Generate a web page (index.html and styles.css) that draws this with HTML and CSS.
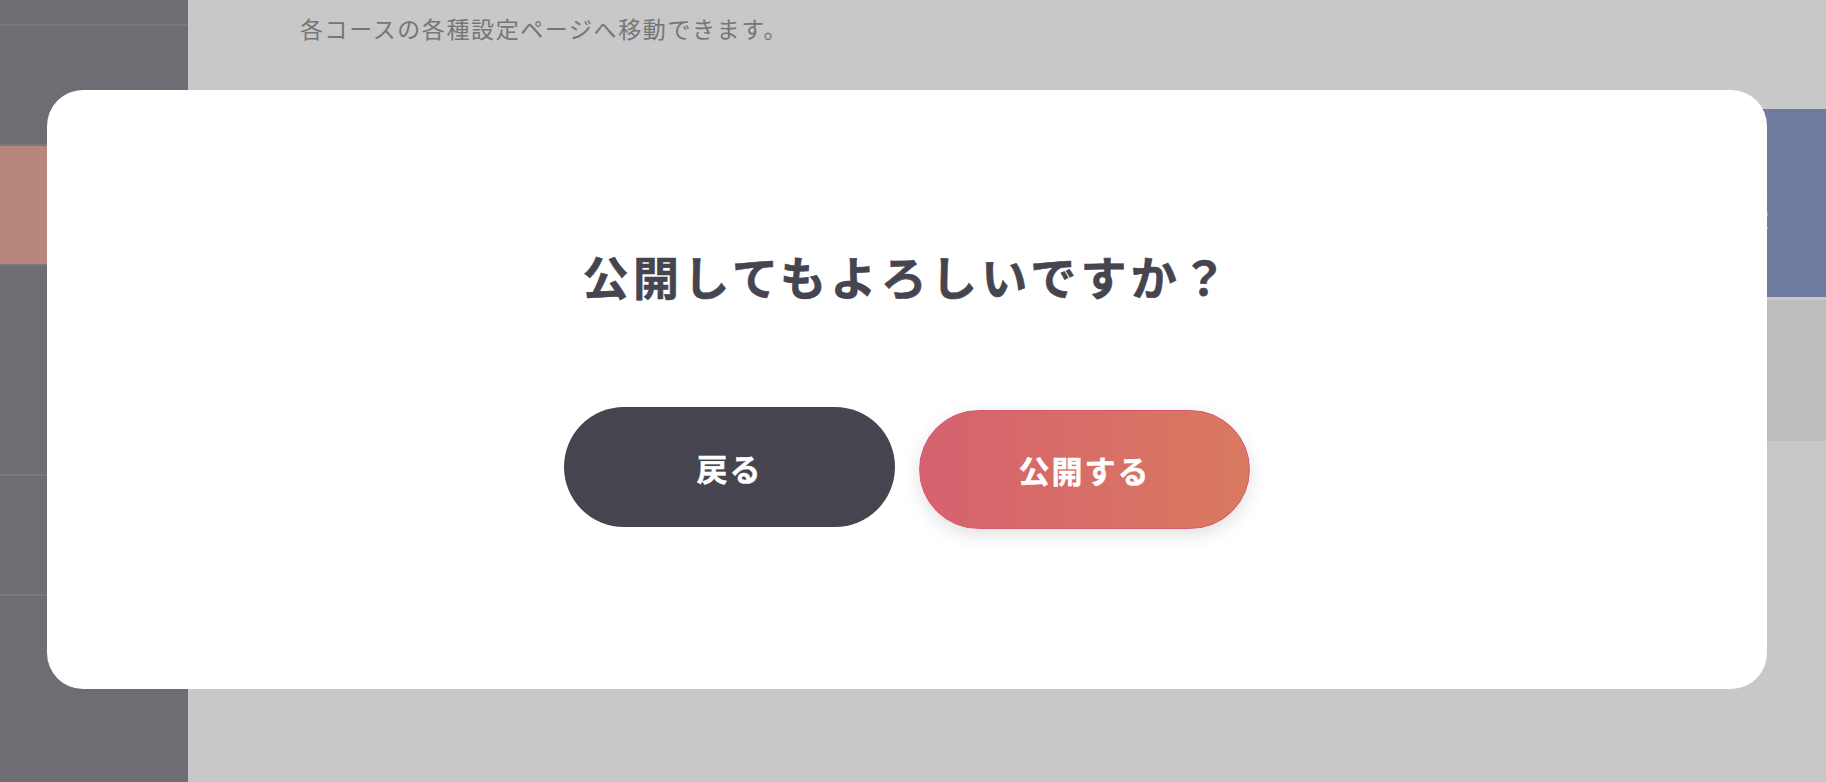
FILE: index.html
```html
<!DOCTYPE html>
<html lang="ja">
<head>
    <meta charset="UTF-8">
    <title>コース設定</title>
    <link rel="stylesheet" href="styles.css">
</head>
<body>
    <div class="layout">
        <aside class="sidebar">
            <div class="nav-item nav-item--top"></div>
            <div class="nav-item"></div>
            <div class="nav-item nav-item--active"></div>
            <div class="nav-item nav-item--tall"></div>
            <div class="nav-item"></div>
            <div class="nav-item nav-item--last"></div>
        </aside>

        <main class="content">
            <p class="lead">各コースの各種設定ページへ移動できます。</p>
            <ul class="course-list">
                <li class="course-row">
                    <div class="course-info"></div>
                    <a class="course-action">コース<br>設定</a>
                </li>
                <li class="course-row course-row--plain">
                    <div class="course-info"></div>
                    <a class="course-action"></a>
                </li>
            </ul>
        </main>
    </div>

    <!-- 公開確認モーダル -->
    <div class="overlay">
        <div class="modal">
            <h2 class="modal-title">公開してもよろしいですか？</h2>
            <div class="modal-actions">
                <button class="btn btn-back">戻る</button>
                <button class="btn btn-publish">公開する</button>
            </div>
        </div>
    </div>
</body>
</html>
```

FILE: styles.css
```css
body {
    margin: 0;
    padding: 0;
    font-family: 'Noto Sans CJK JP', 'Noto Sans', sans-serif;
    background: #ffffff;
    height: 100vh;
    overflow: hidden;
}

.layout {
    display: flex;
    height: 100vh;
}

.sidebar {
    width: 188px;
    flex-shrink: 0;
    background-color: #8e8c94;
    display: flex;
    flex-direction: column;
}

.nav-item {
    height: 118px;
    border-bottom: 2px solid #9c9aa3;
    flex-shrink: 0;
}

.nav-item--top {
    height: 24px;
}

.nav-item--active {
    background-color: #ebac9f;
}

.nav-item--tall {
    height: 208px;
}

.nav-item--last {
    border-bottom: none;
}

.content {
    flex: 1;
    padding-top: 13px;
}

.lead {
    margin: 0;
    padding-left: 112px;
    font-size: 23px;
    line-height: 30px;
    letter-spacing: 1.6px;
    color: #979797;
}

.course-list {
    list-style: none;
    margin: 66px 0 0;
    padding: 0 0 0 112px;
    display: flex;
    flex-direction: column;
    gap: 3px;
}

.course-row {
    display: flex;
    height: 188px;
}

.course-row--plain {
    height: 141px;
}

.course-info {
    flex: 1;
}

.course-action {
    width: 300px;
    padding-right: 57px;
    display: flex;
    align-items: center;
    justify-content: flex-end;
    text-align: right;
    font-size: 20px;
    line-height: 32px;
    color: #ffffff;
    background-color: #8e9fcc;
}

.course-row--plain .course-action {
    background-color: #f1f1f1;
}

.overlay {
    position: fixed;
    inset: 0;
    background: rgba(0, 0, 0, 0.216);
    padding: 90px 59px 93px 47px;
    display: flex;
}

.modal {
    flex: 1;
    background-color: white;
    border-radius: 36px;
    display: flex;
    flex-direction: column;
    align-items: center;
    padding-top: 151px;
}

.modal-title {
    margin: 0;
    font-size: 46px;
    line-height: 68px;
    font-weight: 700;
    letter-spacing: 4.3px;
    color: #45444f;
    -webkit-text-stroke: 0.6px #45444f;
}

.modal-actions {
    display: flex;
    align-items: flex-start;
    gap: 24px;
    margin-top: 98px;
}

.btn {
    width: 331px;
    height: 120px;
    border-radius: 60px;
    border: none;
    font-family: inherit;
    font-size: 31px;
    font-weight: 700;
    letter-spacing: 2px;
    color: white;
    -webkit-text-stroke: 0.4px white;
    cursor: pointer;
}

.btn-back {
    background-color: #46454f;
}

.btn-publish {
    margin-top: 3px;
    height: 119px;
    border: 1px solid #d65a72;
    background: linear-gradient(to right, #d6616f, #d97a5f);
    box-shadow: 0 6px 18px rgba(0, 0, 0, 0.12);
}
```
